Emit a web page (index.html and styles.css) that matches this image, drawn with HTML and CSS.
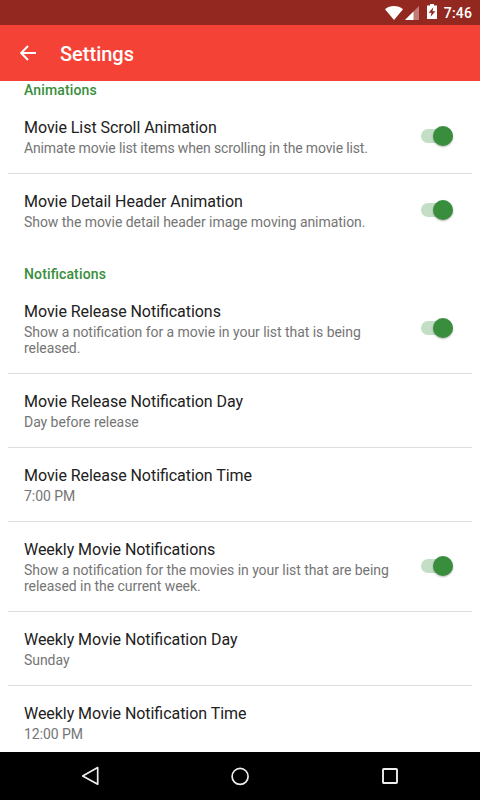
FILE: index.html
```html
<!DOCTYPE html>
<html lang="en">
<head>
    <meta charset="UTF-8">
    <meta name="viewport" content="width=device-width, initial-scale=1.0">
    <title>Settings</title>
    <link rel="stylesheet" href="styles.css">
</head>
<body>

<div class="status-bar">
    <svg class="wifi" width="18" height="14" viewBox="0 0 18 14">
        <path d="M0 3.200C2.500 1 5.700 0 9 0S15.500 1 18 3.200L9 14Z" fill="#fff"/>
    </svg>
    <svg class="signal" width="14" height="14" viewBox="0 0 14 14">
        <path d="M14 0V14H0Z" fill="#fff" opacity="0.4"/>
        <path d="M8.500 5.500V14H0Z" fill="#fff"/>
    </svg>
    <svg class="battery" width="10" height="15" viewBox="0 0 10 15">
        <path d="M3 0H7V1.500H10V15H0V1.500H3Z" fill="#fff"/>
        <path d="M6.300 3.300L1.700 8.700H4.500L3.600 12.800L8.400 7.200H5.500Z" fill="#8f2720"/>
    </svg>
    <span class="clock">7:46</span>
</div>

<header>
    <svg class="back" width="16" height="16" viewBox="0 0 16 16">
        <path d="M16 8H1.500M8 1L1.200 8L8 15" fill="none" stroke="#fff" stroke-width="1.900"/>
    </svg>
    <h1>Settings</h1>
</header>

<main>
    <section>
        <h2>Animations</h2>
        <div class="item">
            <div class="text">
                <h3>Movie List Scroll Animation</h3>
                <p class="tight">Animate movie list items when scrolling in the movie list.</p>
            </div>
            <div class="switch"><span class="thumb"></span></div>
        </div>
        <div class="item">
            <div class="text">
                <h3>Movie Detail Header Animation</h3>
                <p>Show the movie detail header image moving animation.</p>
            </div>
            <div class="switch"><span class="thumb"></span></div>
        </div>
    </section>

    <section>
        <h2>Notifications</h2>
        <div class="item">
            <div class="text">
                <h3>Movie Release Notifications</h3>
                <p>Show a notification for a movie in your list that is being released.</p>
            </div>
            <div class="switch"><span class="thumb"></span></div>
        </div>
        <div class="item">
            <div class="text">
                <h3>Movie Release Notification Day</h3>
                <p>Day before release</p>
            </div>
        </div>
        <div class="item">
            <div class="text">
                <h3>Movie Release Notification Time</h3>
                <p>7:00 PM</p>
            </div>
        </div>
        <div class="item">
            <div class="text">
                <h3>Weekly Movie Notifications</h3>
                <p>Show a notification for the movies in your list that are being released in the current week.</p>
            </div>
            <div class="switch"><span class="thumb"></span></div>
        </div>
        <div class="item">
            <div class="text">
                <h3>Weekly Movie Notification Day</h3>
                <p>Sunday</p>
            </div>
        </div>
        <div class="item">
            <div class="text">
                <h3>Weekly Movie Notification Time</h3>
                <p>12:00 PM</p>
            </div>
        </div>
    </section>
</main>

<nav>
    <svg width="20" height="20" viewBox="0 0 20 20">
        <path d="M17.700 1.600V18.200L2.700 9.900Z" fill="none" stroke="#eee" stroke-width="1.700" stroke-linejoin="round"/>
    </svg>
    <svg width="20" height="20" viewBox="0 0 20 20">
        <circle cx="10.100" cy="10.400" r="8" fill="none" stroke="#eee" stroke-width="1.700"/>
    </svg>
    <svg width="20" height="20" viewBox="0 0 20 20">
        <rect x="3" y="3" width="14" height="14" rx="0.800" fill="none" stroke="#eee" stroke-width="1.900"/>
    </svg>
</nav>

</body>
</html>
```

FILE: styles.css
```css
body {
    font-family: Roboto, sans-serif;
    margin: 0;
    background-color: #fff;
    color: #212121;
    height: 100vh;
    display: flex;
    flex-direction: column;
    overflow: hidden;
}

h1, h2, h3, p {
    margin: 0;
    font-feature-settings: "liga" 1;
}

.status-bar {
    height: 25px;
    flex-shrink: 0;
    box-sizing: border-box;
    padding-right: 8px;
    background-color: #922820;
    color: #fff;
    display: flex;
    justify-content: flex-end;
    align-items: center;
}

.wifi {
    margin-right: 2px;
}

.signal {
    margin-right: 8px;
}

.battery {
    margin-right: 7px;
    margin-bottom: 2px;
}

.clock {
    font-size: 14px;
    font-weight: 500;
    line-height: 16px;
    letter-spacing: 0.15px;
    padding-top: 1px;
}

header {
    height: 56px;
    flex-shrink: 0;
    box-sizing: border-box;
    padding: 0 20px;
    background-color: #f44336;
    color: #fff;
    display: flex;
    align-items: center;
    gap: 24px;
}

h1 {
    font-size: 20px;
    font-weight: 500;
    line-height: 24px;
    padding-top: 2px;
}

main {
    flex: 1;
    min-height: 0;
    overflow: hidden;
}

h2 {
    font-size: 14px;
    font-weight: 500;
    line-height: 16px;
    letter-spacing: 0.14px;
    color: #388e3c;
    padding: 19px 24px 2px;
}

section:first-child h2 {
    padding-top: 1px;
}

.item {
    display: flex;
    align-items: center;
    justify-content: space-between;
    margin: 0 8px;
    padding: 17px 19.5px 17px 16px;
    border-bottom: 1px solid #dedede;
}

.item:last-child {
    border-bottom: none;
}

.text {
    width: 372px;
}

h3 {
    font-size: 16px;
    font-weight: 400;
    line-height: 22px;
    letter-spacing: -0.05px;
    margin-bottom: 1px;
}

p {
    font-size: 14px;
    line-height: 16px;
    letter-spacing: -0.05px;
    color: #757575;
}

.tight {
    letter-spacing: -0.14px;
}

.switch {
    width: 32px;
    height: 14px;
    margin-bottom: 1px;
    border-radius: 7px;
    background-color: #c3dec4;
    display: flex;
    align-items: center;
    justify-content: flex-end;
}

.thumb {
    width: 20px;
    height: 20px;
    flex-shrink: 0;
    border-radius: 50%;
    background-color: #388e3c;
    box-shadow: 0 1px 2px rgba(0, 0, 0, 0.3);
}

nav {
    height: 48px;
    flex-shrink: 0;
    padding: 0 15px;
    background-color: #000;
    display: flex;
    align-items: center;
    justify-content: space-around;
}
```
